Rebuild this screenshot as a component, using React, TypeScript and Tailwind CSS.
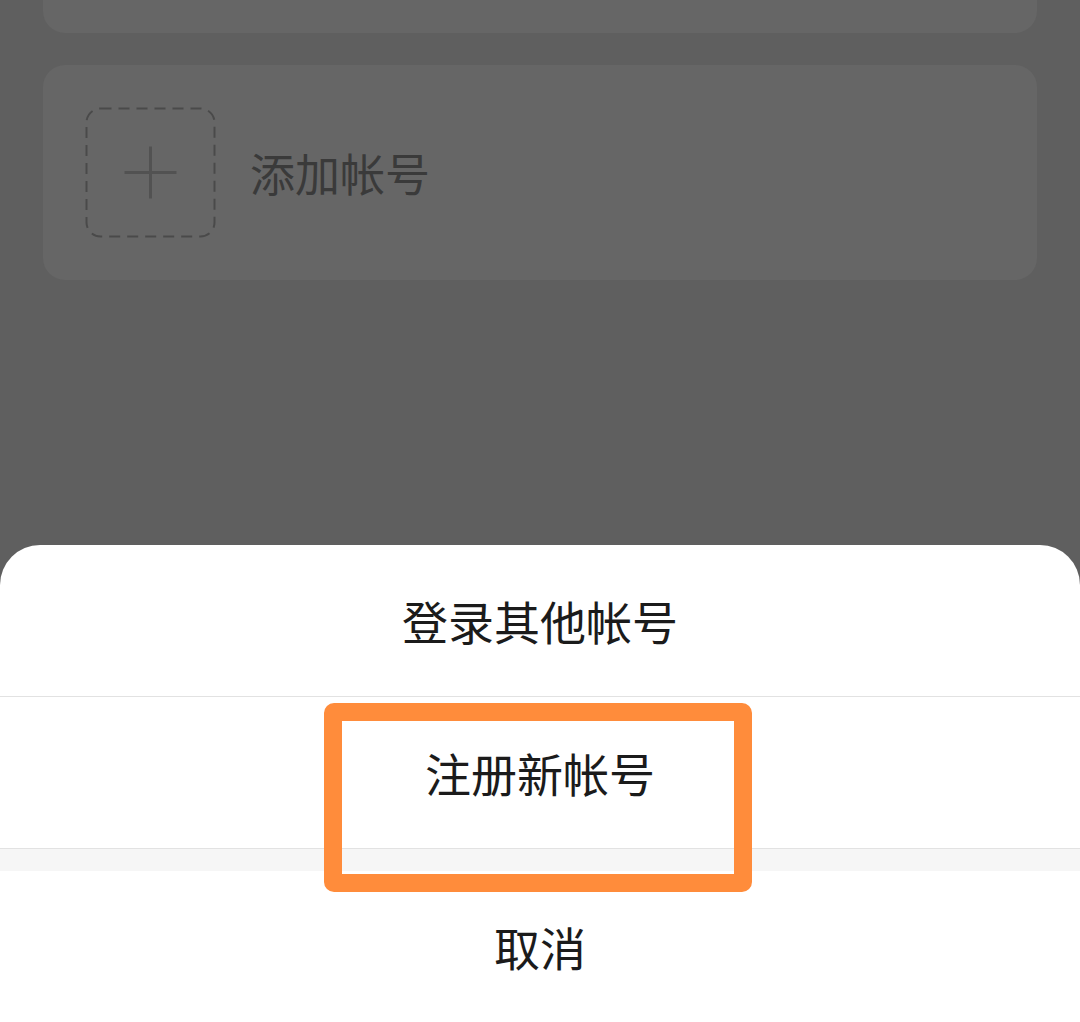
const sheetItems = ["登录其他帐号", "注册新帐号"];

export default function App() {
  return (
    <div
      className="relative h-[1022px] w-[1080px] overflow-hidden bg-[#5f5f5f]"
      style={{ fontFamily: '"Noto Sans CJK SC", "Noto Sans", sans-serif' }}
    >
      {/* dimmed account list behind the sheet */}
      <div className="flex flex-col gap-[32px] px-[43px]">
        <div className="-mt-[40px] h-[73px] rounded-b-[22px] bg-[#666666]" />
        <div className="flex h-[215px] items-center gap-[34px] rounded-[22px] bg-[#666666] pl-[42px]">
          <svg width="131" height="131" viewBox="0 0 131 131">
            <rect
              x="1.5"
              y="1.5"
              width="128"
              height="128"
              rx="14"
              fill="none"
              stroke="#4a4a4a"
              strokeWidth="2"
              strokeDasharray="11 7"
            />
            <path d="M65.5 39.5v52M39.5 65.5h52" stroke="#525252" strokeWidth="3" />
          </svg>
          <span className="text-[45px] leading-none text-[#3a3a3a]">添加帐号</span>
        </div>
      </div>

      {/* action sheet */}
      <div className="absolute inset-x-0 bottom-0 flex flex-col overflow-hidden rounded-t-[40px] bg-white">
        {sheetItems.map((label) => (
          <div
            key={label}
            className="flex h-[152px] items-center justify-center border-b border-[#e2e2e2] text-[46px] text-[#1b1b1b]"
          >
            {label}
          </div>
        ))}
        <div className="h-[22px] bg-[#f6f6f6]" />
        <div className="flex h-[151px] items-center justify-center text-[46px] text-[#1b1b1b]">取消</div>
      </div>

      {/* highlight annotation */}
      <div className="pointer-events-none absolute left-[324px] top-[703px] h-[189px] w-[428px] rounded-[10px] border-[18px] border-[#ff8c3b]" />
    </div>
  );
}
